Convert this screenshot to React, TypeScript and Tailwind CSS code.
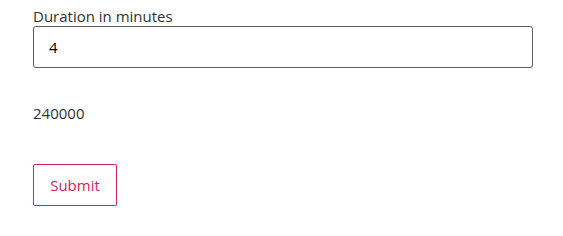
export default function App() {
  return (
    <div className="px-[33px] pt-[6px] font-['Segoe_UI','Open_Sans',sans-serif] text-[15px] text-[#323130]">
      <label className="block leading-[20px]">Duration in minutes</label>
      <input
        type="number"
        defaultValue="4"
        className="block h-[42px] w-[500px] rounded-[3px] border border-[#605e5c] px-[15px] text-[15px] text-black outline-none"
      />
      <div className="mt-[35px] leading-[20px]">240000</div>
      <button
        type="button"
        className="mt-[41px] h-[42px] w-[84px] rounded-[2px] border border-[#d0245e] text-[15px] text-[#d0245e]"
      >
        Submit
      </button>
    </div>
  );
}
